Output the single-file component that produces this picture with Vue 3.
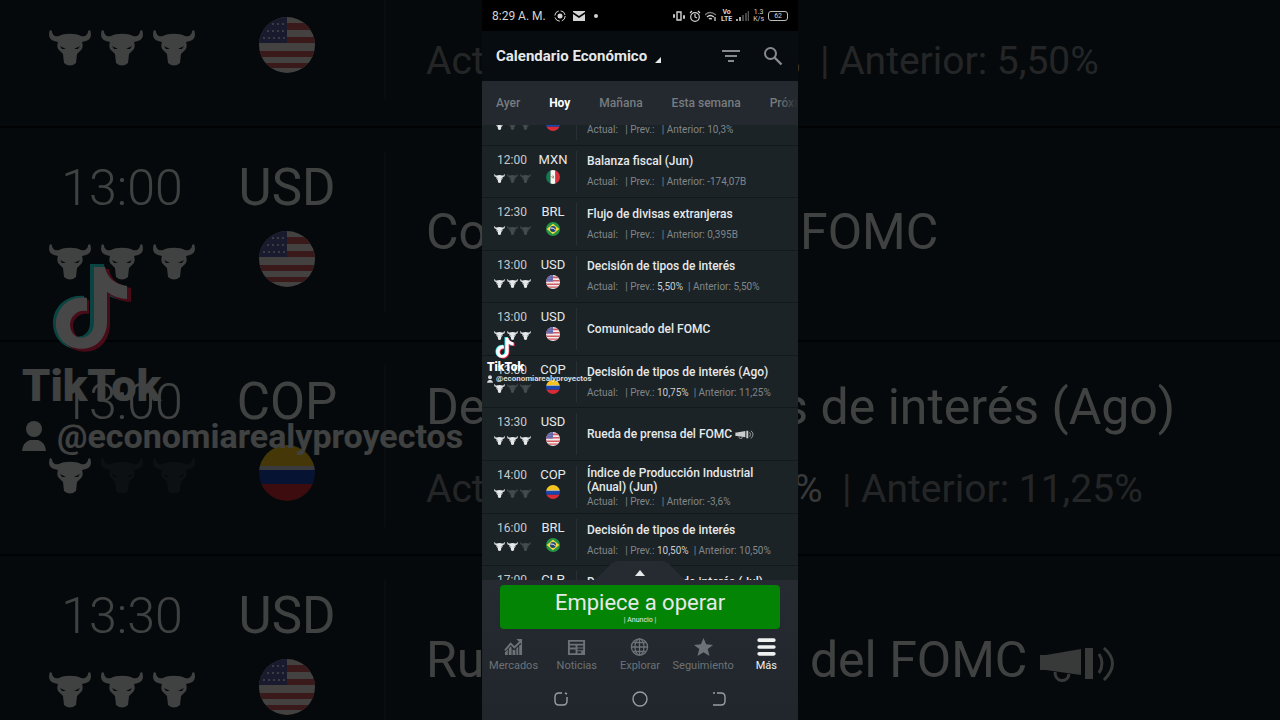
<script setup>
import { ref } from 'vue';

const tabs = ['Ayer', 'Hoy', 'Mañana', 'Esta semana', 'Próxima semana'];
const activeTab = ref('Hoy');

const events = [
  { time: '11:00', currency: 'COP', impact: 1, title: 'Tasa de desempleo (Jun)', last: '10,3%' },
  { time: '12:00', currency: 'MXN', impact: 1, title: 'Balanza fiscal (Jun)', last: '-174,07B' },
  { time: '12:30', currency: 'BRL', impact: 1, title: 'Flujo de divisas extranjeras', last: '0,395B' },
  { time: '13:00', currency: 'USD', impact: 3, title: 'Decisión de tipos de interés', prev: '5,50%', last: '5,50%' },
  { time: '13:00', currency: 'USD', impact: 3, title: 'Comunicado del FOMC' },
  { time: '13:00', currency: 'COP', impact: 1, title: 'Decisión de tipos de interés (Ago)', prev: '10,75%', last: '11,25%' },
  { time: '13:30', currency: 'USD', impact: 3, title: 'Rueda de prensa del FOMC', speech: true },
  { time: '14:00', currency: 'COP', impact: 1, title: 'Índice de Producción Industrial (Anual) (Jun)', last: '-3,6%', long: true },
  { time: '16:00', currency: 'BRL', impact: 2, title: 'Decisión de tipos de interés', prev: '10,50%', last: '10,50%' },
  { time: '17:00', currency: 'CLP', impact: 2, title: 'Decisión de tipos de interés (Jul)', prev: '5,75%', last: '5,75%' }
];
const enlarged = events.slice(3, 7);

const navItems = [
  { id: 'markets', label: 'Mercados' },
  { id: 'news', label: 'Noticias' },
  { id: 'explore', label: 'Explorar' },
  { id: 'star', label: 'Seguimiento' },
  { id: 'more', label: 'Más' }
];
const activeNav = ref('more');
</script>

<template>
  <svg class="sprite" aria-hidden="true">
    <symbol id="bull" viewBox="0 0 42 36">
      <path
        fill="currentColor"
        fill-rule="evenodd"
        d="M1 0L3 1C3 5 6 7 10 6C15 3 27 3 32 6C36 7 39 5 39 1L41 0C43 5 42 10 37 11L33 12C34 15 34 18 32 20L28 24L27 33Q21 38 15 33L14 24L10 20C8 18 8 15 9 12L5 11C0 10-1 5 1 0ZM11 16L17 19L13 19ZM31 16L25 19L29 19Z"
      />
    </symbol>
    <symbol id="flag-USD" viewBox="0 0 56 56">
      <path fill="#f3e9ea" d="M0 0H56V56H0Z" />
      <path fill="#cf5a60" d="M0 6H56V13H0ZM0 20H56V26H0ZM0 34H56V40H0ZM0 46H56V51H0Z" />
      <path fill="#5d5fa5" d="M0 0H28V26H0Z" />
      <path stroke="#d5d6ea" stroke-width="2" stroke-dasharray="2 3" d="M13 7H27M8 14H27M4 21H27" />
    </symbol>
    <symbol id="flag-COP" viewBox="0 0 56 56">
      <path fill="#f6c51d" d="M0 0H56V21H0Z" />
      <path fill="#c9d0dc" d="M0 21H56V25H0Z" />
      <path fill="#1746b5" d="M0 25H56V39H0Z" />
      <path fill="#d82b35" d="M0 39H56V56H0Z" />
    </symbol>
    <symbol id="flag-MXN" viewBox="0 0 56 56">
      <path fill="#11784f" d="M0 0H18V56H0Z" />
      <path fill="#f5f5f2" d="M18 0H38V56H18Z" />
      <path fill="#d6303b" d="M38 0H56V56H38Z" />
      <path fill="none" stroke="#9b8560" stroke-width="4" d="M23 25Q24 34 32 31M26 23L32 27" />
    </symbol>
    <symbol id="flag-BRL" viewBox="0 0 56 56">
      <path fill="#249447" d="M0 0H56V56H0Z" />
      <path fill="#f4dc3b" d="M28 7L53 28L28 49L3 28Z" />
      <circle cx="28" cy="28" r="12" fill="#204477" />
      <path fill="none" stroke="#f2f4f2" stroke-width="4" d="M17 24Q30 22 39 32" />
    </symbol>
    <symbol id="flag-CLP" viewBox="0 0 56 56">
      <path fill="#f5f5f2" d="M0 0H56V28H0Z" />
      <path fill="#2850a0" d="M0 0H22V28H0Z" />
      <path fill="#d6303b" d="M0 28H56V56H0Z" />
    </symbol>
    <symbol id="megaphone" viewBox="0 0 75 37">
      <path fill="currentColor" d="M0 10H6L41 4V30L6 25H0ZM45 3H53V34H45Z" />
      <path fill="none" stroke="currentColor" stroke-width="3" d="M15 27C15 38 28 38 29 29" />
      <path fill="none" stroke="currentColor" stroke-width="3" d="M59 9Q65 18 59 28M64 3Q81 18 64 35" />
    </symbol>
    <symbol id="note" viewBox="0 0 80 90">
      <path fill="#25f4ee" d="M38 0H52Q54 18 72 22V36Q62 36 52 29V60C50 96 1 92 1 59C1 42 16 30 32 32V46C23 44 15 50 15 59C16 78 38 76 38 59Z" />
      <path fill="#fe2c55" d="M44 5H57Q59 20 79 24V38Q68 38 58 31V62C55 99 8 93 7 63C7 45 21 34 37 36V50C28 48 21 55 21 62C22 80 43 78 44 61Z" />
      <path fill="#fff" d="M42 3H53Q56 19 75 22V35Q65 35 55 28V60C52 95 4 91 4 60C4 43 19 31 35 34V47C26 45 18 52 18 61C19 79 41 77 42 60Z" />
    </symbol>
    <symbol id="person" viewBox="0 0 24 30">
      <circle cx="12" cy="8" r="8" fill="currentColor" />
      <path fill="currentColor" d="M0 30Q1 21 8 19H16Q23 21 24 30Z" />
    </symbol>
    <symbol id="markets" viewBox="0 0 20 17">
      <path fill="none" stroke="currentColor" stroke-width="2" d="M1 12L7 5L11 9L17 3" />
      <path fill="currentColor" d="M13 0H19V6ZM1 14L4 11V17H1ZM5 10L7 8L8 9V17H5ZM9 11L11 12L12 11V17H9ZM13 10L15 8V17H13ZM16 7L19 5V17H16Z" />
    </symbol>
    <symbol id="news" viewBox="0 0 20 17">
      <path fill="currentColor" fill-rule="evenodd" d="M1 1H19V17H1ZM3 3V5H17V3ZM3 7V9H9V7ZM3 11V15H9V11ZM11 7V9H17V7ZM11 10V12H17V10ZM11 13V15H15V13Z" />
    </symbol>
    <symbol id="explore" viewBox="0 0 20 20">
      <g fill="none" stroke="currentColor" stroke-width="1.4">
        <circle cx="10" cy="10" r="9" />
        <ellipse cx="10" cy="10" rx="5" ry="9" />
        <path d="M10 1V19M1 10H19M3 5H17M3 15H17" />
      </g>
    </symbol>
    <symbol id="star" viewBox="0 0 18 17">
      <path fill="currentColor" d="M9 0L11.5 6L18 6.500L13 10.500L14.700 17L9 13.400L3.300 17L5 10.500L0 6.500L6.500 6Z" />
    </symbol>
    <symbol id="more" viewBox="0 0 18 17">
      <path stroke="currentColor" stroke-width="3.400" stroke-linecap="round" d="M2 2H16M2 8.500H16M2 15H16" />
    </symbol>
  </svg>

  <div class="stage">
    <div class="backdrop" aria-hidden="true">
      <ul class="big-events">
        <li v-for="event in enlarged" :key="event.time + event.title" class="big-event">
          <div class="when">
            <span class="time">{{ event.time }}</span>
            <span class="bulls">
              <svg v-for="n in 3" :key="n" class="bull" :class="{ dim: n > event.impact }"><use href="#bull" /></svg>
            </span>
          </div>
          <div class="currency">
            <span>{{ event.currency }}</span>
            <svg class="flag"><use :href="'#flag-' + event.currency" /></svg>
          </div>
          <div class="details">
            <p class="title">
              {{ event.title }} <svg v-if="event.speech" class="megaphone"><use href="#megaphone" /></svg>
            </p>
            <p v-if="event.last" class="values">Actual:&nbsp;&nbsp; | Prev.: <b>{{ event.prev }}</b>&nbsp; | Anterior: {{ event.last }}</p>
          </div>
        </li>
      </ul>
      <div class="big-mark">
        <svg class="mark-note"><use href="#note" /></svg>
        <strong class="mark-brand">TikTok</strong>
        <span class="mark-user"><svg><use href="#person" /></svg>@economiarealyproyectos</span>
      </div>
    </div>

    <main class="phone">
      <div class="status">
        <span>8:29 A. M.</span>
        <svg width="12" height="12" viewBox="0 0 12 12">
          <circle cx="6" cy="6" r="5.200" fill="none" stroke="currentColor" stroke-dasharray="6.200 2" />
          <circle cx="6" cy="6" r="2.500" fill="currentColor" />
        </svg>
        <svg width="12" height="10" viewBox="0 0 12 10">
          <path fill="currentColor" d="M0 0H12V1L6 5L0 1ZM0 3L6 7L12 3V10H0Z" />
        </svg>
        <svg class="dot" width="4" height="4" viewBox="0 0 4 4"><circle cx="2" cy="2" r="2" fill="currentColor" /></svg>
        <div class="status-right">
          <svg width="12" height="10" viewBox="0 0 12 10">
            <path fill="none" stroke="currentColor" stroke-width="1.400" d="M4 1H8V9H4ZM1 3V7M11 4V8M2 5H0M10 6H12" />
          </svg>
          <svg width="12" height="12" viewBox="0 0 12 12">
            <path fill="none" stroke="currentColor" stroke-width="1.200" d="M6 4V7L8 8M1 3L3 1M11 3L9 1" />
            <circle cx="6" cy="7" r="4.300" fill="none" stroke="currentColor" stroke-width="1.200" />
          </svg>
          <svg width="12" height="10" viewBox="0 0 12 10">
            <path fill="none" stroke="#777" stroke-width="1.300" d="M0 4Q5-1 11 4" />
            <path fill="none" stroke="currentColor" stroke-width="1.300" d="M2 6Q5 3 9 6M4 8Q5 7 7 8M10 6V10" />
          </svg>
          <span class="lte">Vo<br />LTE</span>
          <svg width="13" height="10" viewBox="0 0 13 10">
            <path stroke="currentColor" stroke-width="1.600" d="M1 8V10M4 6V10" />
            <path stroke="#555" stroke-width="1.600" d="M7 4V10M10 2V10M12.500 0V10" />
          </svg>
          <span class="speed">1.3<br />K/s</span>
          <span class="battery">62</span>
        </div>
      </div>

      <header class="header">
        <h1>Calendario Económico</h1>
        <svg class="corner" width="6" height="6" viewBox="0 0 6 6"><path fill="currentColor" d="M6 0V6H0Z" /></svg>
        <button type="button" aria-label="Filtrar">
          <svg width="20" height="14" viewBox="0 0 20 14">
            <path stroke="currentColor" stroke-width="2" d="M1 2H19M4 7H16M7 12H13" />
          </svg>
        </button>
        <button type="button" aria-label="Buscar">
          <svg width="20" height="20" viewBox="0 0 20 20">
            <circle cx="7.500" cy="7.500" r="5.500" fill="none" stroke="currentColor" stroke-width="2" />
            <path stroke="currentColor" stroke-width="2.400" d="M11.500 11.500L18.500 18.500" />
          </svg>
        </button>
      </header>

      <div class="tabs">
        <button
          v-for="tab in tabs"
          :key="tab"
          type="button"
          :class="{ active: tab === activeTab }"
          @click="activeTab = tab"
        >
          {{ tab }}
        </button>
      </div>

      <div class="scroller">
        <ul class="events">
          <li v-for="event in events" :key="event.time + event.title" class="event">
            <div class="when">
              <span class="time">{{ event.time }}</span>
              <span class="bulls">
                <svg v-for="n in 3" :key="n" class="bull" :class="{ dim: n > event.impact }"><use href="#bull" /></svg>
              </span>
            </div>
            <div class="currency">
              <span>{{ event.currency }}</span>
              <svg class="flag"><use :href="'#flag-' + event.currency" /></svg>
            </div>
            <div class="details" :class="{ long: event.long }">
              <p class="title">
                {{ event.title }} <svg v-if="event.speech" class="megaphone"><use href="#megaphone" /></svg>
              </p>
              <p v-if="event.last" class="values">Actual:&nbsp;&nbsp; | Prev.: <b>{{ event.prev }}</b>&nbsp; | Anterior: {{ event.last }}</p>
            </div>
          </li>
        </ul>
      </div>

      <footer class="bottom">
        <button type="button" class="handle" aria-label="Desplegar">
          <svg width="96" height="20" viewBox="0 0 96 20">
            <path fill="#252b31" d="M0 20Q3 19 5 17L19 3Q22 0 27 0H69Q74 0 77 3L91 17Q93 19 96 20Z" />
            <path fill="#e6e8e9" d="M48 9L53 15H43Z" />
          </svg>
        </button>
        <button type="button" class="ad">
          <span class="ad-title">Empiece a operar</span>
          <span class="ad-note">| Anuncio |</span>
        </button>
        <nav class="nav">
          <a v-for="item in navItems" :key="item.id" href="#" :class="{ active: item.id === activeNav }" @click.prevent="activeNav = item.id">
            <svg><use :href="'#' + item.id" /></svg>
            {{ item.label }}
          </a>
        </nav>
        <div class="system">
          <button type="button" aria-label="Recientes">
            <svg width="16" height="16" viewBox="0 0 16 16">
              <path fill="none" stroke="currentColor" stroke-width="1.400" d="M9 2H6Q2 2 2 6V10Q2 14 6 14H10Q14 14 14 10V6M12 2L14 3" />
            </svg>
          </button>
          <button type="button" aria-label="Inicio">
            <svg width="16" height="16" viewBox="0 0 16 16">
              <circle cx="8" cy="8" r="7" fill="none" stroke="currentColor" stroke-width="1.400" />
            </svg>
          </button>
          <button type="button" aria-label="Atrás">
            <svg width="16" height="16" viewBox="0 0 16 16">
              <path fill="none" stroke="currentColor" stroke-width="1.400" d="M6 2H10Q14 2 14 6V10Q14 14 10 14H2M2 2H4" />
            </svg>
          </button>
        </div>
      </footer>

      <div class="mark">
        <svg class="mark-note"><use href="#note" /></svg>
        <strong class="mark-brand">TikTok</strong>
        <span class="mark-user"><svg><use href="#person" /></svg>@economiarealyproyectos</span>
      </div>
    </main>
  </div>
</template>

<style>
body {
  margin: 0;
  background: #000;
}
</style>

<style scoped>
.sprite {
  position: absolute;
  width: 0;
  height: 0;
}

.stage {
  position: relative;
  display: flex;
  justify-content: center;
  height: 100vh;
  overflow: hidden;
  font-family: Roboto, "Liberation Sans", sans-serif;
  color: #e6e9ea;
}

ul {
  margin: 0;
  padding: 0;
  list-style: none;
}

p,
h1 {
  margin: 0;
}

button {
  padding: 0;
  border: 0;
  background: none;
  color: inherit;
  font: inherit;
  cursor: pointer;
}

svg {
  display: block;
  flex: none;
}

.when,
.currency {
  display: flex;
  flex-direction: column;
  align-items: center;
}

.time {
  font-weight: 300;
}

.bulls {
  display: flex;
}

.dim {
  opacity: 0.2;
}

.flag {
  border-radius: 50%;
}

.details {
  display: flex;
  flex-direction: column;
  justify-content: center;
}

.values {
  color: #80868a;
  white-space: nowrap;
}

.values b {
  color: #c9cdcf;
  font-weight: 400;
}

.megaphone {
  display: inline-block;
  vertical-align: middle;
  color: #c9cbcc;
}

/* enlarged, dimmed copy behind the phone */
.backdrop {
  position: absolute;
  inset: 0;
  overflow: hidden;
  background: #142029;
  opacity: 0.28;
}

.big-events {
  display: grid;
  grid-auto-rows: 1fr;
  height: 856px;
  margin-top: -86px;
}

.big-event {
  display: grid;
  grid-template-columns: 204px 126px 1fr;
  padding-left: 20px;
  border-bottom: 2px solid #06090b;
}

.big-event .when,
.big-event .currency {
  padding-top: 32px;
  gap: 15px;
  font-size: 51px;
  line-height: 56px;
}

.big-event .time {
  font-size: 50px;
}

.big-event .bulls {
  gap: 10px;
  padding-top: 13px;
}

.big-event .bull {
  width: 42px;
  height: 36px;
}

.big-event .dim {
  opacity: 0.12;
}

.big-event .flag {
  width: 56px;
  height: 56px;
}

.big-event .details {
  margin: 23px 0 27px 34px;
  padding-left: 40px;
  gap: 30px;
  border-left: 2px solid #262e34;
}

.big-event .title {
  font-size: 50px;
  line-height: 56px;
  white-space: nowrap;
}

.big-event .values {
  font-size: 39px;
  line-height: 48px;
}

.big-event .megaphone {
  width: 75px;
  height: 37px;
}

.big-mark {
  position: absolute;
  top: 264px;
  left: 22px;
}

.mark-brand,
.mark-user {
  display: flex;
  align-items: center;
  font-weight: 900;
}

.big-mark .mark-note {
  width: 80px;
  height: 90px;
  margin-left: 30px;
}

.big-mark .mark-brand {
  margin-top: 4px;
  font-size: 45px;
  line-height: 56px;
}

.big-mark .mark-user {
  gap: 11px;
  font-size: 34px;
  font-weight: 700;
  line-height: 44px;
}

.big-mark .mark-user svg {
  width: 24px;
  height: 30px;
}

.phone {
  position: relative;
  display: flex;
  flex-direction: column;
  height: 100%;
  aspect-ratio: 79 / 180;
  background: #1b2327;
}

.status {
  display: flex;
  align-items: center;
  gap: 8px;
  height: 31px;
  padding: 0 10px;
  background: #000;
  font-size: 12px;
  color: #d4d4d4;
}

.status > svg {
  margin-right: -1px;
}

.status .dot {
  margin-left: 2px;
}

.status-right {
  display: flex;
  align-items: center;
  gap: 4px;
  margin-left: auto;
}

.lte,
.speed {
  font-size: 7px;
  font-weight: 700;
  line-height: 7px;
  text-align: center;
}

.speed {
  font-weight: 400;
}

.battery {
  padding: 0 5px;
  border: 1px solid #bbb;
  border-radius: 3px;
  font-size: 7px;
  line-height: 8px;
}

.header {
  display: flex;
  align-items: center;
  height: 50px;
  padding: 0 15px 0 14px;
  background: #070c10;
}

.header h1 {
  font-size: 15px;
  font-weight: 700;
  line-height: 20px;
}

.corner {
  margin: 8px auto 0 8px;
}

.header button {
  margin-left: 22px;
  color: #878a8c;
}

.tabs {
  position: relative;
  display: flex;
  gap: 29px;
  height: 44px;
  padding-left: 14px;
  overflow: hidden;
  background: #23292e;
}

.tabs::after {
  content: "";
  position: absolute;
  inset: 0 0 0 auto;
  width: 20px;
  background: linear-gradient(90deg, transparent, #23292e);
}

.tabs button {
  flex: none;
  color: #777c80;
  font-size: 12px;
  font-weight: 500;
}

.tabs .active {
  color: #fff;
  font-weight: 700;
}

.scroller {
  flex: 1;
  min-height: 0;
  overflow: hidden;
}

.events {
  display: grid;
  grid-auto-rows: 1fr;
  height: 526px;
  margin-top: -32px;
}

.event {
  display: grid;
  grid-template-columns: 44px 38px 1fr;
  padding-left: 8px;
  border-bottom: 1px solid #12181b;
}

.event .when,
.event .currency {
  padding-top: 7px;
  gap: 3px;
  font-size: 13px;
  line-height: 14px;
}

.event .time {
  font-size: 12px;
  font-weight: 400;
  color: #c6cacc;
}

.event .bulls {
  gap: 2px;
  padding-top: 4px;
}

.event .bull {
  width: 11px;
  height: 9px;
}

.event .flag {
  width: 14px;
  height: 14px;
}

.event .details {
  margin: 5px 8px 5px 4px;
  padding-left: 10px;
  gap: 8px;
  border-left: 1px solid #293035;
}

.event .details.long {
  gap: 2px;
}

.event .title {
  font-size: 12px;
  font-weight: 500;
  line-height: 14px;
}

.event .values {
  font-size: 10px;
  line-height: 12px;
}

.event .megaphone {
  width: 19px;
  height: 9px;
}

.bottom {
  position: relative;
  display: flex;
  flex-direction: column;
  height: 140px;
  background: linear-gradient(#252b31, #20262b);
}

.handle {
  position: absolute;
  bottom: 100%;
  left: 50%;
  margin: 0 0 -1px -48px;
}

.ad {
  display: flex;
  flex-direction: column;
  align-items: center;
  justify-content: center;
  height: 44px;
  margin: 5px 18px 0;
  border-radius: 4px;
  background: #048404;
}

.ad-title {
  font-size: 22px;
  line-height: 26px;
}

.ad-note {
  font-size: 7px;
  line-height: 8px;
}

.nav {
  display: grid;
  grid-template-columns: repeat(5, 1fr);
  padding-top: 9px;
}

.nav a {
  display: flex;
  flex-direction: column;
  align-items: center;
  gap: 3px;
  color: #6d7276;
  font-size: 11px;
  line-height: 14px;
  text-decoration: none;
}

.nav svg {
  width: 19px;
  height: 18px;
}

.nav .active {
  color: #eff0f0;
}

.system {
  display: flex;
  justify-content: center;
  gap: 63px;
  padding-top: 18px;
  color: #9a9da0;
}

.mark {
  position: absolute;
  top: 337px;
  left: 5px;
  color: #fff;
}

.mark .mark-note {
  width: 20px;
  height: 22px;
  margin-left: 8px;
}

.mark .mark-brand {
  margin-top: 1px;
  font-size: 12px;
  line-height: 14px;
}

.mark .mark-user {
  gap: 3px;
  color: #d8dadb;
  font-size: 8px;
  font-weight: 700;
  line-height: 10px;
}

.mark .mark-user svg {
  width: 6px;
  height: 8px;
}
</style>
